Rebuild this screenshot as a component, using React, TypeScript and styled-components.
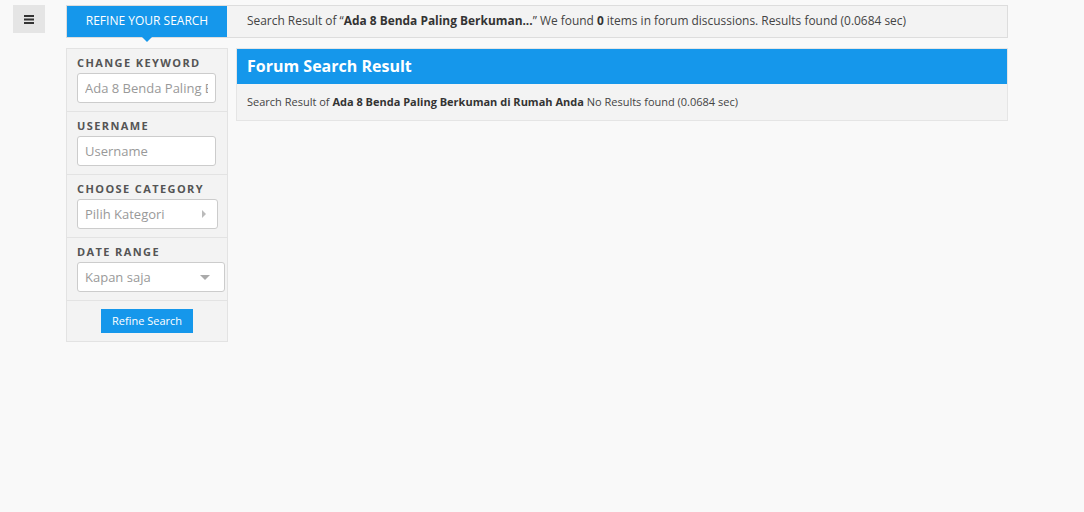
import styled, { createGlobalStyle } from "styled-components";

const GlobalStyle = createGlobalStyle`
    html, body {
        margin: 0;
        padding: 0;
        background: #f9f9f9;
        font-family: "Open Sans", "Liberation Sans", sans-serif;
        color: #333;
    }
    * {
        box-sizing: border-box;
    }
`;

const Page = styled.div`
    display: flex;
    align-items: flex-start;
    gap: 21px;
    padding: 5px 0 0 13px;
    min-height: 512px;
`;

const MenuButton = styled.button`
    width: 32px;
    height: 28px;
    border: none;
    background: #e5e5e5;
    display: flex;
    align-items: center;
    justify-content: center;
    padding: 0;
    cursor: pointer;
`;

const Content = styled.div`
    width: 942px;
    display: flex;
    flex-direction: column;
    gap: 10px;
`;

const TopBar = styled.div`
    height: 33px;
    display: flex;
    align-items: stretch;
    border: 1px solid #ddd;
    background: #f3f3f3;
`;

const RefineTab = styled.div`
    position: relative;
    width: 160px;
    background: #1597eb;
    color: #fff;
    font-size: 12px;
    display: flex;
    align-items: center;
    justify-content: center;
    padding-bottom: 2px;
    &::after {
        content: "";
        position: absolute;
        left: 50%;
        bottom: -5px;
        margin-left: -5px;
        border-left: 5px solid transparent;
        border-right: 5px solid transparent;
        border-top: 5px solid #1597eb;
    }
`;

const TopText = styled.div`
    padding: 0 0 4px 20px;
    display: flex;
    align-items: center;
    font-size: 11.93px;
    color: #444;
    white-space: nowrap;
    b {
        font-weight: 700;
        color: #333;
    }
`;

const Row = styled.div`
    display: flex;
    align-items: flex-start;
    gap: 8px;
`;

const Sidebar = styled.div`
    width: 162px;
    border: 1px solid #e3e3e3;
    background: #f3f3f3;
`;

const Section = styled.div<{ $center?: boolean }>`
    padding: 8px 10px;
    border-bottom: 1px solid #e3e3e3;
    display: flex;
    flex-direction: column;
    align-items: ${(p) => (p.$center ? "center" : "flex-start")};
    &:last-child {
        border-bottom: none;
    }
`;

const Label = styled.div`
    height: 16px;
    line-height: 12px;
    font-size: 11px;
    font-weight: 700;
    letter-spacing: 1.4px;
    color: #555;
    text-transform: uppercase;
`;

const Field = styled.div<{ $width: number }>`
    position: relative;
    width: ${(p) => p.$width}px;
    height: 30px;
    border: 1px solid #ccc;
    border-radius: 3px;
    background: #fff;
    display: flex;
    align-items: center;
    padding: 0 7px;
    font-size: 13px;
    color: #999;
`;

const FieldText = styled.span`
    flex: 1;
    min-width: 0;
    white-space: nowrap;
    overflow: hidden;
`;

const Arrow = styled.span<{ $dir: "right" | "down" }>`
    position: absolute;
    top: 50%;
    ${(p) =>
        p.$dir === "right"
            ? `
        right: 11px;
        margin-top: -4px;
        border-top: 4px solid transparent;
        border-bottom: 4px solid transparent;
        border-left: 4px solid #bbb;
    `
            : `
        right: 14px;
        margin-top: -2px;
        border-left: 5px solid transparent;
        border-right: 5px solid transparent;
        border-top: 5px solid #aaa;
    `}
`;

const RefineButton = styled.button`
    width: 92px;
    height: 24px;
    border: none;
    background: #1597eb;
    color: #fff;
    font-family: inherit;
    font-size: 11px;
    padding: 0 0 2px;
    cursor: pointer;
`;

const Panel = styled.div`
    flex: 1;
    border: 1px solid #e5e5e5;
    background: #f3f3f3;
`;

const PanelHeader = styled.div`
    height: 35px;
    background: #1597eb;
    color: #fff;
    font-size: 16px;
    font-weight: 700;
    display: flex;
    align-items: center;
    padding: 0 0 2px 10px;
`;

const PanelBody = styled.div`
    height: 36px;
    display: flex;
    align-items: center;
    padding: 0 0 2px 10px;
    font-size: 11px;
    color: #444;
    b {
        font-weight: 700;
        color: #333;
    }
`;

function App() {
    return (
        <>
            <GlobalStyle />
            <Page>
                <MenuButton>
                    <svg width="10" height="9" viewBox="0 0 10 9">
                        <rect x="0" y="0" width="10" height="2" fill="#333" />
                        <rect x="0" y="3.5" width="10" height="2" fill="#333" />
                        <rect x="0" y="7" width="10" height="2" fill="#333" />
                    </svg>
                </MenuButton>
                <Content>
                    <TopBar>
                        <RefineTab>REFINE YOUR SEARCH</RefineTab>
                        <TopText>
                            Search Result of “<b>Ada 8 Benda Paling Berkuman...</b>” We found&nbsp;<b>0</b>&nbsp;items in forum discussions. Results found (0.0684 sec)
                        </TopText>
                    </TopBar>
                    <Row>
                        <Sidebar>
                            <Section>
                                <Label>Change Keyword</Label>
                                <Field $width={139}>
                                    <FieldText>Ada 8 Benda Paling Berkuman di Rumah Anda</FieldText>
                                </Field>
                            </Section>
                            <Section>
                                <Label>Username</Label>
                                <Field $width={139}>
                                    <FieldText>Username</FieldText>
                                </Field>
                            </Section>
                            <Section>
                                <Label>Choose Category</Label>
                                <Field $width={141}>
                                    <FieldText>Pilih Kategori</FieldText>
                                    <Arrow $dir="right" />
                                </Field>
                            </Section>
                            <Section>
                                <Label>Date Range</Label>
                                <Field $width={148}>
                                    <FieldText>Kapan saja</FieldText>
                                    <Arrow $dir="down" />
                                </Field>
                            </Section>
                            <Section $center>
                                <RefineButton>Refine Search</RefineButton>
                            </Section>
                        </Sidebar>
                        <Panel>
                            <PanelHeader>Forum Search Result</PanelHeader>
                            <PanelBody>
                                Search Result of&nbsp;<b>Ada 8 Benda Paling Berkuman di Rumah Anda</b>&nbsp;No Results found (0.0684 sec)
                            </PanelBody>
                        </Panel>
                    </Row>
                </Content>
            </Page>
        </>
    );
}

export default App;
